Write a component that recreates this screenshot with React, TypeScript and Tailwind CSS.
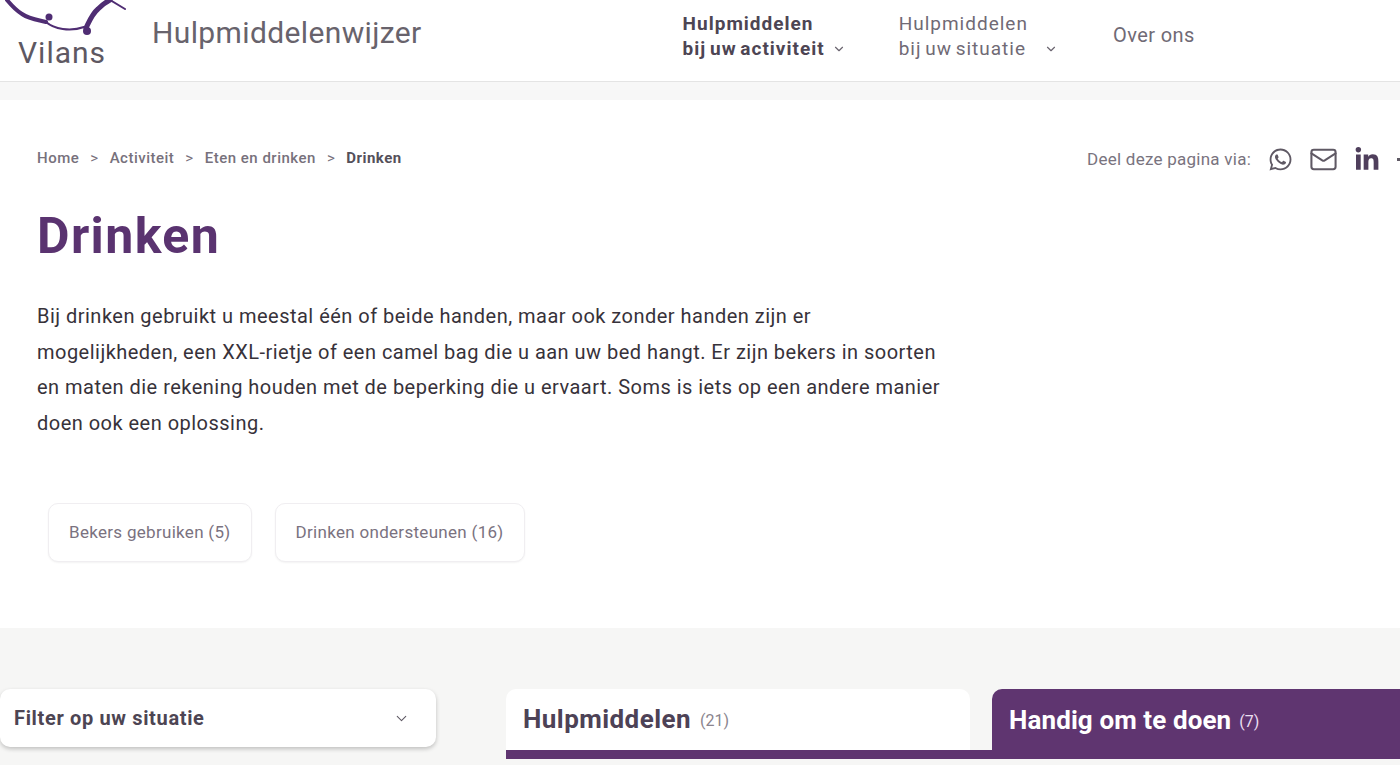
import React from 'react';
import { ChevronDown, Mail } from 'lucide-react';
import { FaWhatsapp, FaLinkedinIn } from 'react-icons/fa';

const font = "font-['Roboto','Liberation_Sans',sans-serif]";

// Vilans mark, the top of it is cut off by the window
function VilansMark() {
  return (
    <svg width="126" height="36" viewBox="0 0 126 36" fill="none" className="block">
      <path d="M5 0 C10 6 15 11 20 14 C27 19 36 20 44 22" stroke="#4f2d73" strokeWidth="4" strokeLinecap="round" />
      <path d="M44 22 C52 29 68 32 82 27" stroke="#4f2d73" strokeWidth="2.2" strokeLinecap="round" />
      <path d="M84 28 C87 22 90 14 96 9 C100 5 104 2 108 0" stroke="#4f2d73" strokeWidth="5" strokeLinecap="round" />
      <path d="M108 0 L123 9" stroke="#4f2d73" strokeWidth="2" strokeLinecap="round" />
      <circle cx="47" cy="17" r="3.5" fill="#4f2d73" />
      <circle cx="85" cy="31" r="4" fill="#4f2d73" />
    </svg>
  );
}

function NavItem({ top, bottom, bold, gap }: { top: string; bottom: string; bold?: boolean; gap: string }) {
  return (
    <div className={`text-[19px] leading-[25px] tracking-[1px] [word-spacing:-2px] ${bold ? 'font-bold text-[#4d4553]' : 'text-[#706a75]'}`}>
      <div>{top}</div>
      <div className={`flex items-center ${gap}`}>
        {bottom}
        <ChevronDown size={14} strokeWidth={2} className="text-[#6a646f]" />
      </div>
    </div>
  );
}

function Chip({ label }: { label: string }) {
  return (
    <div className="flex h-[59px] items-center rounded-[10px] border border-[#f0eef1] bg-white px-5 text-[17px] tracking-[0.3px] text-[#7a7280] shadow-[0_1px_2px_rgba(0,0,0,0.05)]">
      {label}
    </div>
  );
}

export default function App() {
  return (
    <div className={`${font} relative h-[765px] w-[1400px] overflow-hidden bg-white`}>
      {/* Header */}
      <header className="flex h-[82px] items-start border-b border-[#e4e4e4] bg-white">
        <div className="ml-[2px] flex w-[126px] shrink-0 flex-col items-start">
          <VilansMark />
          <span className="ml-[16px] mt-[1px] text-[30px] leading-[32px] tracking-[1px] text-[#5e5862]">Vilans</span>
        </div>
        <div className="ml-[24px] mt-[14px] text-[30px] leading-[38px] tracking-[0.37px] text-[#68636c]">Hulpmiddelenwijzer</div>
        <nav className="ml-[261px] mt-[11px] flex items-start">
          <NavItem top="Hulpmiddelen" bottom="bij uw activiteit" bold gap="gap-[7px]" />
          <div className="ml-[53px]">
            <NavItem top="Hulpmiddelen" bottom="bij uw situatie" gap="gap-[18px]" />
          </div>
          <div className="ml-[55px] mt-[12px] text-[20px] leading-[25px] tracking-[0.4px] text-[#706a75]">Over ons</div>
        </nav>
      </header>
      <div className="h-[18px] bg-[#f7f7f7]" />

      {/* Intro */}
      <main className="h-[528px] px-[37px]">
        <div className="flex items-center justify-between pt-[41px]">
          <div className="flex items-center text-[15px] font-medium leading-[24px] tracking-[0.5px] text-[#77717c]">
            <span>Home</span>
            <span className="mx-[11px] font-normal">&gt;</span>
            <span>Activiteit</span>
            <span className="mx-[11px] font-normal">&gt;</span>
            <span>Eten en drinken</span>
            <span className="mx-[11px] font-normal">&gt;</span>
            <span className="font-bold text-[#55505a]">Drinken</span>
          </div>
          <div className="-mr-[42px] mt-[4px] flex items-center text-[#5f5964]">
            <span className="text-[17px] tracking-[0.25px] text-[#79737e]">Deel deze pagina via:</span>
            <FaWhatsapp size={25} className="ml-[17px]" />
            <Mail size={29} strokeWidth={1.7} className="ml-[16px]" />
            <FaLinkedinIn size={26} className="ml-[16px] text-[#4f3f5c]" />
            <span className="ml-[17px] h-[3px] w-[8px] bg-[#5f5964]" />
          </div>
        </div>
        <h1 className="mt-[32px] text-[50px] font-bold leading-[60px] tracking-[1.4px] text-[#5a3370]">Drinken</h1>
        <p className="mt-[33px] w-[905px] text-[20px] leading-[35.5px] tracking-[0.48px] text-[#37323a]">
          Bij drinken gebruikt u meestal één of beide handen, maar ook zonder handen zijn er mogelijkheden, een XXL-rietje of een camel bag die u aan uw bed hangt. Er zijn bekers in soorten en maten die rekening houden met de beperking die u ervaart. Soms is iets op een andere manier doen ook een oplossing.
        </p>
        <div className="ml-[11px] mt-[62px] flex gap-[23px]">
          <Chip label="Bekers gebruiken (5)" />
          <Chip label="Drinken ondersteunen (16)" />
        </div>
      </main>

      {/* Filter and tabs */}
      <section className="flex h-[137px] items-start bg-[#f6f6f5] pt-[61px]">
        <div className="flex h-[58px] w-[436px] shrink-0 items-center justify-between rounded-[10px] bg-white pl-[14px] pr-[26px] shadow-[0_2px_4px_rgba(0,0,0,0.22)]">
          <span className="text-[20px] font-bold tracking-[0.65px] text-[#4d4553]">Filter op uw situatie</span>
          <ChevronDown size={17} strokeWidth={1.5} className="text-[#5f5964]" />
        </div>
        <div className="ml-[70px] flex-1">
          <div className="flex h-[61px] items-stretch">
            <div className="flex h-[61px] w-[464px] items-center rounded-t-[10px] bg-white pl-[17px]">
              <span className="text-[26px] font-bold tracking-[0.45px] text-[#4d4256]">Hulpmiddelen</span>
              <span className="ml-[9px] mt-[3px] text-[16px] text-[#8a848e]">(21)</span>
            </div>
            <div className="ml-[22px] flex h-[70px] flex-1 items-center rounded-tl-[10px] bg-[#5f3570] pb-[7px] pl-[17px] text-white">
              <span className="text-[26px] font-bold tracking-[0.1px]">Handig om te doen</span>
              <span className="ml-[8px] mt-[3px] text-[16px] text-[#eadff0]">(7)</span>
            </div>
          </div>
          <div className="h-[9px] bg-[#5f3570]" />
        </div>
      </section>
    </div>
  );
}
